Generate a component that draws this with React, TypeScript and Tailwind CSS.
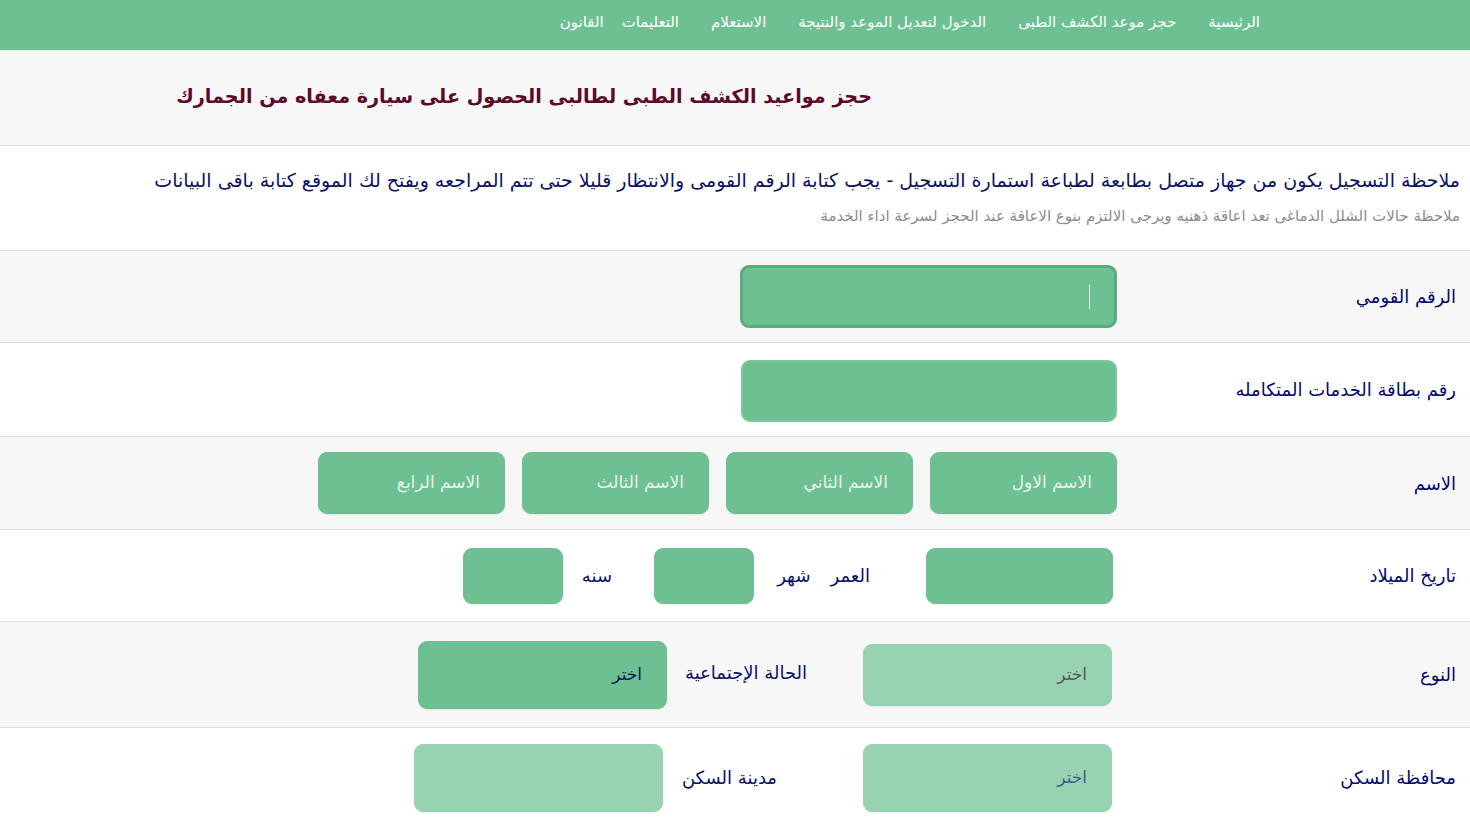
import React from "react";

const font = { fontFamily: '"DejaVu Sans", "Liberation Sans", sans-serif' };

const navItems = [
  "الرئيسية",
  "حجز موعد الكشف الطبى",
  "الدخول لتعديل الموعد والنتيجة",
  "الاستعلام",
  "التعليمات",
  "القانون",
];

function Row({ label, gray, h, children }: { label: string; gray?: boolean; h: string; children: React.ReactNode }) {
  return (
    <div className={`flex items-center border-b border-[#dddddd] ${h} ${gray ? "bg-[#f7f7f7]" : "bg-white"}`}>
      <div className="w-[353px] shrink-0 pr-[14px] text-[18px] text-[#000a6b]">{label}</div>
      <div className="flex items-center">{children}</div>
    </div>
  );
}

function Box({ w, h, placeholder, tone = "dark", textTone = "ph" }: { w: string; h: string; placeholder?: string; tone?: "dark" | "light"; textTone?: "ph" | "gray" | "navy" | "slate" }) {
  const bg = tone === "dark" ? "bg-[#6cc091] border-[#6cc091]" : "bg-[#98d3b1] border-[#98d3b1]";
  const txt =
    textTone === "ph" ? "text-[#e9f1ec]" : textTone === "gray" ? "text-[#555555]" : textTone === "navy" ? "text-[#0b1266]" : "text-[#3d5a8a]";
  return (
    <div className={`${w} ${h} ${bg} shrink-0 border rounded-[9px] shadow-[0_1px_1px_rgba(0,0,0,0.06)] flex items-center pr-[24px] text-[17px] ${txt}`}>
      {placeholder}
    </div>
  );
}

export default function App() {
  return (
    <div dir="rtl" style={font} className="min-h-screen bg-white">
      {/* navbar */}
      <div className="h-[51px] bg-[#6cc091] border-b border-[#e9f4ec] flex items-center pb-[5px] pr-[210px]">
        <div className="flex items-center gap-[32px] text-[15px] text-white">
          {navItems.map((n, i) => (
            <span key={n} className={i === 5 ? "-mr-[14px]" : ""}>{n}</span>
          ))}
        </div>
      </div>

      {/* title */}
      <div className="h-[95px] bg-[#f7f7f7] border-b border-[#dddddd] flex items-center pb-[2px] pr-[598px]">
        <h1 className="text-[19.2px] font-bold text-[#5b0a2c]">حجز مواعيد الكشف الطبى لطالبى الحصول على سيارة معفاه من الجمارك</h1>
      </div>

      {/* notes */}
      <div className="h-[105px] border-b border-[#dddddd] pr-[10px] pt-[21px]">
        <p className="text-[19px] text-[#0b1266] leading-[26px] whitespace-nowrap">
          ملاحظة التسجيل يكون من جهاز متصل بطابعة لطباعة استمارة التسجيل - يجب كتابة الرقم القومى والانتظار قليلا حتى تتم المراجعه ويفتح لك الموقع كتابة باقى البيانات
        </p>
        <p className="mt-[12px] text-[15px] text-[#8c8c8c]">
          ملاحظة حالات الشلل الدماغى تعد اعاقة ذهنيه ويرجى الالتزم بنوع الاعاقة عند الحجز لسرعة اداء الخدمة
        </p>
      </div>

      {/* form */}
      <Row label="الرقم القومي" gray h="h-[92px]">
        <div className="w-[377px] h-[63px] bg-[#6cc091] border-[3px] border-[#58ad7d] rounded-[9px] flex items-center pr-[24px]">
          <span className="w-px h-[24px] bg-white" />
        </div>
      </Row>

      <Row label="رقم بطاقة الخدمات المتكامله" h="h-[94px]">
        <div className="w-[376px] h-[62px] bg-[#6cc091] border-2 border-[#7cc79d] rounded-[9px] mt-[2px]" />
      </Row>

      <Row label="الاسم" gray h="h-[93px]">
        <div className="flex gap-[17px]">
          <Box w="w-[187px]" h="h-[62px]" placeholder="الاسم الاول" />
          <Box w="w-[187px]" h="h-[62px]" placeholder="الاسم الثاني" />
          <Box w="w-[187px]" h="h-[62px]" placeholder="الاسم الثالث" />
          <Box w="w-[187px]" h="h-[62px]" placeholder="الاسم الرابع" />
        </div>
      </Row>

      <Row label="تاريخ الميلاد" h="h-[92px]">
        <div className="mr-[4px] flex items-center">
          <Box w="w-[187px]" h="h-[56px]" />
          <div className="w-[172px] flex items-center pr-[56px] gap-[20px] text-[18px] text-[#0b1266]">
            <span>العمر</span>
            <span>شهر</span>
          </div>
          <Box w="w-[100px]" h="h-[56px]" />
          <div className="w-[91px] pr-[42px] text-[18px] text-[#0b1266]">سنه</div>
          <Box w="w-[100px]" h="h-[56px]" />
        </div>
      </Row>

      <Row label="النوع" gray h="h-[106px]">
        <div className="mr-[5px] flex items-center">
          <Box w="w-[249px]" h="h-[62px]" tone="light" placeholder="اختر" textTone="gray" />
          <div className="w-[196px] pr-[56px] -mt-[4px] text-[18px] text-[#0b1266] whitespace-nowrap">الحالة الإجتماعية</div>
          <Box w="w-[249px]" h="h-[68px]" placeholder="اختر" textTone="navy" />
        </div>
      </Row>

      <Row label="محافظة السكن" h="h-[100px]">
        <div className="mr-[5px] flex items-center">
          <Box w="w-[249px]" h="h-[68px]" tone="light" placeholder="اختر" textTone="slate" />
          <div className="w-[200px] pr-[86px] text-[18px] text-[#0b1266] whitespace-nowrap">مدينة السكن</div>
          <Box w="w-[249px]" h="h-[68px]" tone="light" />
        </div>
      </Row>
    </div>
  );
}
